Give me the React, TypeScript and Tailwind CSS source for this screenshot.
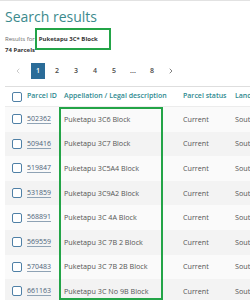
import { ChevronLeft, ChevronRight } from "lucide-react";

type Row = { id: string; appellation: string; status: string; land: string };

const rows: Row[] = [
  { id: "502362", appellation: "Puketapu 3C6 Block", status: "Current", land: "South Auckland" },
  { id: "509416", appellation: "Puketapu 3C7 Block", status: "Current", land: "South Auckland" },
  { id: "519847", appellation: "Puketapu 3C5A4 Block", status: "Current", land: "South Auckland" },
  { id: "531859", appellation: "Puketapu 3C9A2 Block", status: "Current", land: "South Auckland" },
  { id: "568891", appellation: "Puketapu 3C 4A Block", status: "Current", land: "South Auckland" },
  { id: "569559", appellation: "Puketapu 3C 7B 2 Block", status: "Current", land: "South Auckland" },
  { id: "570483", appellation: "Puketapu 3C 7B 2B Block", status: "Current", land: "South Auckland" },
  { id: "661163", appellation: "Puketapu 3C No 9B Block", status: "Current", land: "South Auckland" },
];

const pages = ["1", "2", "3", "4", "5", "...", "8"];

function Checkbox() {
  return <span className="ml-[7px] block h-[10px] w-[10px] rounded-[2px] border-[1.5px] border-[#4f80a6] bg-white" />;
}

export default function App() {
  return (
    <div className="relative h-[300px] w-[250px] overflow-hidden border-t border-[#e2e2e2] bg-white font-['Open_Sans',sans-serif]">
      <div className="pl-[5px]">
        <h1 className="mt-[6px] text-[14px] leading-[19px] text-[#3b8a8c]">Search results</h1>

        <div className="mt-[8px] flex items-center gap-[4px] text-[6px] leading-[11px]">
          <span className="text-[#6b6b6b]">Results for</span>
          <span className="font-bold text-[#333]">Puketapu 3C* Block</span>
        </div>
        <div className="text-[6px] font-bold leading-[11px] text-[#333]">74 Parcels</div>

        <div className="mt-[7px] flex h-[16px] items-center text-[7px] font-semibold text-[#4a4a4a]">
          <span className="flex w-[26px] justify-center">
            <ChevronLeft size={8} strokeWidth={2} className="text-[#b0b0b0]" />
          </span>
          {pages.map((p, i) => (
            <span
              key={p}
              className={
                i === 0
                  ? "mr-[5px] flex h-[16px] w-[14px] items-center justify-center bg-[#2b6c98] text-white"
                  : "mr-[5px] flex h-[16px] w-[14px] items-center justify-center"
              }
            >
              {p}
            </span>
          ))}
          <span className="flex w-[14px] justify-center">
            <ChevronRight size={8} strokeWidth={2} className="text-[#444]" />
          </span>
        </div>

        <div className="mt-[7px] border-t border-[#dedede]">
          <div className="grid h-[20px] grid-cols-[22px_37px_119px_52px_1fr] items-center border-b border-[#ececec] text-[7px] font-semibold whitespace-nowrap text-[#2f8a8f]">
            <Checkbox />
            <span>Parcel ID</span>
            <span>Appellation / Legal description</span>
            <span>Parcel status</span>
            <span>Land district</span>
          </div>
          {rows.map((row, i) => (
            <div
              key={row.id}
              className={
                (i % 2 === 0 ? "bg-[#fafafa] " : "bg-[#f3f3f3] ") +
                "grid h-[24.6px] grid-cols-[22px_37px_119px_52px_1fr] items-center text-[7.2px] whitespace-nowrap text-[#555]"
              }
            >
              <Checkbox />
              <span className="text-[7px] text-[#4c6379] underline decoration-[#8fa3b5] underline-offset-[1.5px]">{row.id}</span>
              <span>{row.appellation}</span>
              <span>{row.status}</span>
              <span>{row.land}</span>
            </div>
          ))}
        </div>
      </div>

      <div className="absolute left-[35px] top-[27px] h-[22px] w-[76px] border-2 border-[#23a447]" />
      <div className="absolute left-[59px] top-[106px] h-[193px] w-[104px] border-2 border-[#23a447]" />
    </div>
  );
}
